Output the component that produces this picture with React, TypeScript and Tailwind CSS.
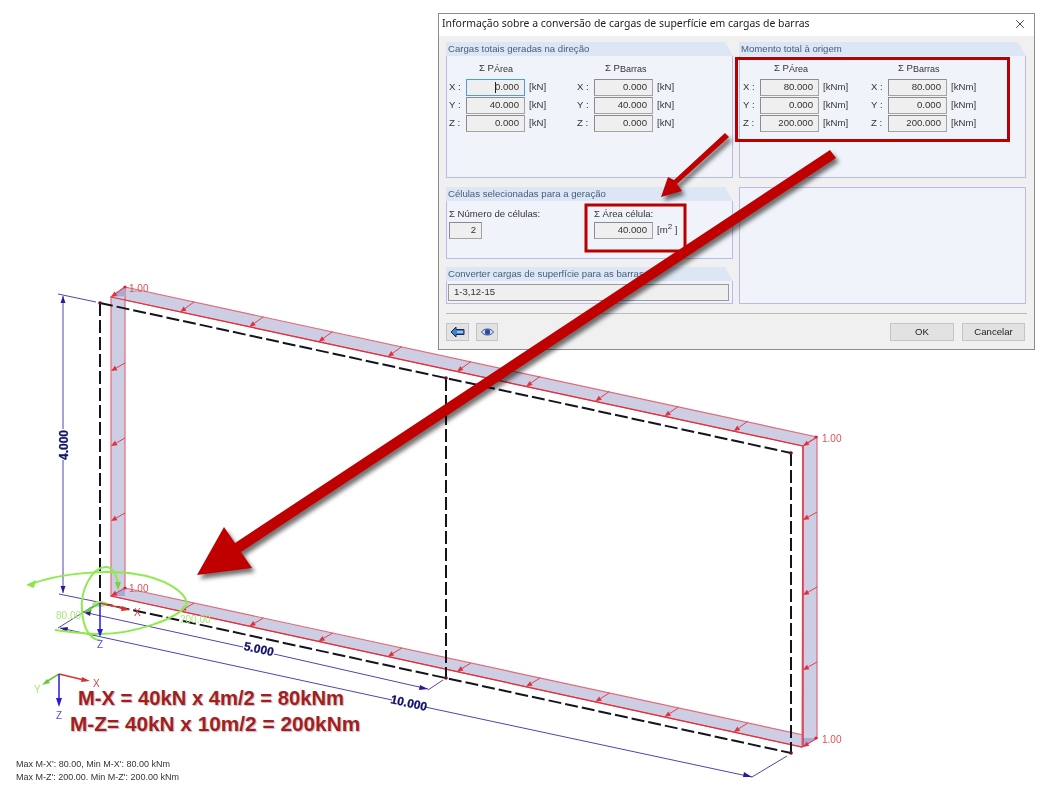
import React from "react";
import { X as CloseIcon } from "lucide-react";

const topArrows = Array.from({ length: 9 }, (_, i) => i + 1);

function Field({ value, w = "w-[59px]", focused = false }: { value: string; w?: string; focused?: boolean }) {
  return (
    <div
      className={`relative h-[17px] ${w} flex items-center justify-end pr-[5px] bg-[#efefef] text-[#333] border ${
        focused ? "border-[#4f9be0]" : "border-[#a3a3a3] border-t-[#8c8c8c] border-l-[#8c8c8c]"
      }`}
    >
      {value}
      {focused && <span className="absolute left-[28px] top-[2px] h-[11px] w-px bg-[#222]" />}
    </div>
  );
}

function Sigma({ sub, left }: { sub: string; left: string }) {
  return (
    <div className={`h-[15px] ${left} leading-[15px] text-[#333] whitespace-nowrap`}>
      Σ P<span className="text-[9px] relative top-[1px]">{sub}</span>
    </div>
  );
}

function Column({ sub, unit, values, focusFirst, subLeft }: { sub: string; unit: string; values: string[]; focusFirst?: boolean; subLeft: string }) {
  return (
    <div className="flex flex-col w-[128px]">
      <Sigma sub={sub} left={subLeft} />
      <div className="mt-[3px] flex flex-col">
        {["X", "Y", "Z"].map((axis, i) => (
          <div key={axis} className="flex items-center h-[18px]">
            <span className="w-[19px] pl-[2px] text-[#333]">{axis} :</span>
            <Field value={values[i]} focused={focusFirst && i === 0} />
            <span className="ml-[4px] text-[#333]">{unit}</span>
          </div>
        ))}
      </div>
    </div>
  );
}

function Group({ title, className, children }: { title?: string; className: string; children?: React.ReactNode }) {
  return (
    <div className={`flex flex-col ${className}`}>
      {title && (
        <div className="h-[14px] shrink-0 bg-[#dce6f4] pl-[2px] leading-[14px] text-[#46607c] whitespace-nowrap [clip-path:polygon(0_0,calc(100%-8px)_0,100%_100%,0_100%)]">
          {title}
        </div>
      )}
      <div className={`flex-1 bg-[#f0f4fa] border-[#b9b9ee] border-x border-b ${title ? "" : "border-t"}`}>{children}</div>
    </div>
  );
}

function Strip({ points }: { points: string }) {
  return <polygon points={points} className="fill-[#cdcde3] stroke-[#e46a76] [stroke-width:1.2]" />;
}

function LoadArrow({ x1, y1, x2, y2 }: { x1: number; y1: number; x2: number; y2: number }) {
  const dx = x2 - x1;
  const dy = y2 - y1;
  const len = Math.hypot(dx, dy);
  const ux = dx / len;
  const uy = dy / len;
  const bx = x2 - ux * 6;
  const by = y2 - uy * 6;
  return (
    <g>
      <line x1={x1} y1={y1} x2={bx} y2={by} className="stroke-[#e0404c]" strokeWidth={1} />
      <polygon
        points={`${x2},${y2} ${bx - uy * 2.5},${by + ux * 2.5} ${bx + uy * 2.5},${by - ux * 2.5}`}
        className="fill-[#e0303c]"
      />
    </g>
  );
}

function Drawing() {
  return (
    <svg className="absolute inset-0 blur-[0.3px]" width={1048} height={794} viewBox="0 0 1048 794">
      {/* member strips */}
      <Strip points="125,287 817,437 803,446 111,297" />
      <Strip points="125,588 817,738 802,747 111,596" />
      <Strip points="111,297 125,287 125,588 111,596" />
      <Strip points="803,446 817,437 817,738 802,747" />
      <polygon points="111,297 125,287 125,296" className="fill-[#a9a9d6]" />
      <polygon points="111,596 125,588 125,596" className="fill-[#a9a9d6]" />
      <polygon points="802,747 817,738 803,738" className="fill-[#a9a9d6]" />
      <line x1="111" y1="297" x2="803" y2="446" className="stroke-[#e0303c]" strokeWidth={1.2} />
      <line x1="803" y1="446" x2="803" y2="747" className="stroke-[#e0303c]" strokeWidth={1.4} />
      <line x1="111" y1="596" x2="802" y2="747" className="stroke-[#e0303c]" strokeWidth={1.2} />

      {topArrows.map((i) => (
        <g key={i}>
          <LoadArrow x1={125 + 69.2 * i} y1={287 + 14.9 * i} x2={111 + 69.2 * i} y2={297 + 14.9 * i} />
          <LoadArrow x1={125 + 69.2 * i} y1={588 + 15 * i} x2={111 + 69.2 * i} y2={596 + 15.1 * i} />
        </g>
      ))}
      {[363, 438, 513].map((y) => (
        <LoadArrow key={y} x1={125} y1={y} x2={111} y2={y + 8} />
      ))}
      {[512, 587, 662].map((y) => (
        <LoadArrow key={y} x1={817} y1={y} x2={803} y2={y + 8} />
      ))}
      <LoadArrow x1={125} y1={287} x2={111} y2={297} />
      <LoadArrow x1={125} y1={588} x2={111} y2={596} />
      <LoadArrow x1={817} y1={437} x2={803} y2={446} />
      <LoadArrow x1={817} y1={738} x2={803} y2={747} />
      {[[125, 287], [816, 437], [125, 588], [816, 738]].map(([cx, cy]) => (
        <circle key={cx + "-" + cy} cx={cx} cy={cy} r={1.6} className="fill-[#e0202c]" />
      ))}

      {/* dashed frame */}
      <g className="stroke-[#14141e]" strokeWidth={2} strokeDasharray="13 4" fill="none">
        <line x1="100" y1="303" x2="791" y2="453" />
        <line x1="100" y1="603" x2="791" y2="753" />
        <line x1="100" y1="303" x2="100" y2="603" />
        <line x1="791" y1="453" x2="791" y2="753" />
        <line x1="446" y1="378" x2="446" y2="678" />
      </g>
      {[[100, 303], [791, 453], [446, 378], [446, 678], [791, 753]].map(([cx, cy]) => (
        <circle key={cx + "-" + cy} cx={cx} cy={cy} r={1.8} className="fill-[#6a1020]" />
      ))}

      {/* dimensions */}
      <g className="stroke-[#5044b0]" strokeWidth={1} fill="none">
        <line x1="58" y1="294" x2="96" y2="302" />
        <line x1="63" y1="296" x2="63" y2="429" />
        <line x1="63" y1="460" x2="63" y2="593" />
        <line x1="59" y1="594" x2="98" y2="602" />
        <line x1="83" y1="612" x2="243" y2="647" />
        <line x1="274" y1="654" x2="428" y2="689" />
        <line x1="428" y1="690" x2="443" y2="680" />
        <line x1="58" y1="628" x2="95" y2="605" />
        <line x1="60" y1="628" x2="392" y2="700" />
        <line x1="425" y1="707" x2="752" y2="777" />
        <line x1="752" y1="777" x2="787" y2="756" />
      </g>
      <g className="fill-[#2a1a9a]">
        <polygon points="63,296 60.5,303 65.5,303" />
        <polygon points="63,593 60.5,586 65.5,586" />
        <polygon points="83,612 91,611 90,616" />
        <polygon points="428,689 420,685 419,690" />
        <polygon points="60,628 68,627 67,632" />
        <polygon points="752,777 744,772 743,777" />
      </g>
      <g className="fill-[#12126e] stroke-[#12126e] [stroke-width:0.3] [font-family:'Liberation_Sans',sans-serif] text-[12px] font-bold">
        <text x={0} y={0} textAnchor="middle" transform="translate(68 445) rotate(-90)">4.000</text>
        <text x={0} y={0} textAnchor="middle" transform="translate(258 653) rotate(12.5)">5.000</text>
        <text x={0} y={0} textAnchor="middle" transform="translate(408 707) rotate(12.5)">10.000</text>
      </g>

      {/* moment rings */}
      <g className="stroke-[#8cec4c]" strokeWidth={2} fill="none">
        <path d="M29 585 C60 572 110 570 135 574 C165 578 185 592 187 603 C180 620 130 634 100 634 C85 634 70 632 55 630" />
        <path d="M118 588 C118 575 112 566 105 567 C92 568 80 590 82 610 C83 628 90 640 100 640" />
      </g>
      <polygon points="26,585 36,580 34,588" className="fill-[#88e848]" />
      <polygon points="118,590 115,582 121,582" className="fill-[#7ad040]" />
      <ellipse cx="100" cy="604" rx="8" ry="3" className="fill-[#a8ec80]" />

      {/* local axes */}
      <g fill="none" strokeWidth={1.5}>
        <line x1="100" y1="603" x2="126" y2="609" className="stroke-[#e03030]" />
        <line x1="100" y1="603" x2="85" y2="612" className="stroke-[#68c838]" />
        <line x1="100" y1="603" x2="100" y2="633" className="stroke-[#2a18e0]" />
        <line x1="59" y1="674" x2="84" y2="680" className="stroke-[#e03030]" />
        <line x1="59" y1="674" x2="46" y2="682" className="stroke-[#68c838]" />
        <line x1="59" y1="674" x2="59" y2="700" className="stroke-[#2a18e0]" />
      </g>
      <polygon points="130,610 122,606 121,611" className="fill-[#d83030]" />
      <polygon points="83,613 90,607 92,611" className="fill-[#68c838]" />
      <polygon points="100,637 97,629 103,629" className="fill-[#2a18e0]" />
      <polygon points="90,681 82,677 81,682" className="fill-[#d83030]" />
      <polygon points="42,685 47,679 50,683" className="fill-[#68c838]" />
      <polygon points="59,707 56,698 62,698" className="fill-[#2a18e0]" />

      <g className="[font-family:'Liberation_Sans',sans-serif] text-[10px]">
        <text x={134} y={616} className="fill-[#e04040]">X</text>
        <text x={97} y={648} className="fill-[#5a48f0]">Z</text>
        <text x={56} y={619} className="fill-[#a8e878]">80.00</text>
        <text x={180} y={623} className="fill-[#a8e878]">200.00</text>
        <text x={93} y={687} className="fill-[#e04040]">X</text>
        <text x={34} y={693} className="fill-[#a8e878]">Y</text>
        <text x={56} y={719} className="fill-[#5a48f0]">Z</text>
        <text x={129} y={292} className="fill-[#e05058]">1.00</text>
        <text x={129} y={592} className="fill-[#e05058]">1.00</text>
        <text x={822} y={442} className="fill-[#e05058]">1.00</text>
        <text x={822} y={743} className="fill-[#e05058]">1.00</text>
      </g>
    </svg>
  );
}

function Dialog() {
  return (
    <div className="absolute left-[438px] top-[13px] w-[597px] h-[337px] flex flex-col bg-[#f0f0f0] border border-[#8c8c8c] text-[9.6px] blur-[0.3px] [font-family:'Liberation_Sans',sans-serif]">
      <div className="h-[22px] shrink-0 bg-white flex items-center justify-between pl-[3px] pr-[7px] pb-[2px] text-[10.45px] text-[#1c1c1c] [font-family:'Noto_Sans',sans-serif]">
        <span>Informação sobre a conversão de cargas de superfície em cargas de barras</span>
        <CloseIcon className="w-[14px] h-[14px] text-[#333]" strokeWidth={1.5} />
      </div>
      <div className="flex-1 pl-[7px] pr-[7px] pt-[6px] grid grid-cols-[287px_287px] gap-x-[6px] grid-rows-[136px_117px] gap-y-[9px]">
        <Group title="Cargas totais geradas na direção" className="">
          <div className="flex pt-[4px]">
            <Column sub="Área" unit="[kN]" values={["0.000", "40.000", "0.000"]} focusFirst subLeft="pl-[32px]" />
            <Column sub="Barras" unit="[kN]" values={["0.000", "40.000", "0.000"]} subLeft="pl-[30px]" />
          </div>
        </Group>
        <Group title="Momento total à origem" className="">
          <div className="flex pt-[4px] pl-[1px]">
            <Column sub="Área" unit="[kNm]" values={["80.000", "0.000", "200.000"]} subLeft="pl-[33px]" />
            <Column sub="Barras" unit="[kNm]" values={["80.000", "0.000", "200.000"]} subLeft="pl-[29px]" />
          </div>
        </Group>
        <div className="flex flex-col justify-between">
          <Group title="Células selecionadas para a geração" className="h-[72px]">
            <div className="flex pl-[2px] pt-[5px]">
              <div className="w-[145px]">
                <div className="h-[15px] leading-[15px] text-[#333]">Σ Número de células:</div>
                <div className="mt-[1px]">
                  <Field value="2" w="w-[33px]" />
                </div>
              </div>
              <div>
                <div className="h-[15px] leading-[15px] text-[#333]">Σ Área célula:</div>
                <div className="mt-[1px] flex items-center">
                  <Field value="40.000" />
                  <span className="ml-[4px] text-[#333]">
                    [m<sup className="text-[8px]">2</sup> ]
                  </span>
                </div>
              </div>
            </div>
          </Group>
          <Group title="Converter cargas de superfície para as barras" className="h-[37px]">
            <div className="pl-[1px] pr-[3px] pt-[3px]">
              <div className="h-[17px] bg-[#efefef] border border-[#9a9a9a] flex items-center pl-[5px] text-[#333]">1-3,12-15</div>
            </div>
          </Group>
        </div>
        <Group className="" />
      </div>
      <div className="mx-[7px] mt-[8px] border-t border-[#bcbcbc]" />
      <div className="h-[27px] shrink-0 mb-[8px] flex items-end justify-between pl-[7px] pr-[9px]">
        <div className="flex gap-x-[7px]">
          <button className="w-[23px] h-[18px] bg-[#e2e2e2] border border-[#c4c4c4] flex items-center justify-center">
            <svg width="15" height="12" viewBox="0 0 15 12">
              <path d="M1 6 L6 1 L6 3.5 L14 3.5 L14 8.5 L6 8.5 L6 11 Z" fill="#3b82d0" stroke="#14284a" strokeWidth="1" />
              <line x1="7" y1="6" x2="13" y2="6" stroke="#ffffff" strokeWidth="1" />
            </svg>
          </button>
          <button className="w-[22px] h-[18px] bg-[#e2e2e2] border border-[#c4c4c4] flex items-center justify-center">
            <svg width="13" height="10" viewBox="0 0 13 10">
              <path d="M0.5 5 C3 1 10 1 12.5 5 C10 9 3 9 0.5 5 Z" fill="#dfe8f8" stroke="#2a4a90" strokeWidth="1" />
              <circle cx="6.5" cy="5" r="2.7" fill="#2a4aa0" />
            </svg>
          </button>
        </div>
        <div className="flex gap-x-[8px]">
          <button className="w-[64px] h-[18px] bg-[#e2e2e2] border border-[#c4c4c4] text-[#222] leading-none">OK</button>
          <button className="w-[63px] h-[18px] bg-[#e2e2e2] border border-[#c4c4c4] text-[#222] leading-none">Cancelar</button>
        </div>
      </div>
    </div>
  );
}

function Annotations() {
  return (
    <svg className="absolute inset-0" width={1048} height={794} viewBox="0 0 1048 794">
      <rect x="736.5" y="58.5" width="272" height="82" fill="none" className="stroke-[#b80000]" strokeWidth={3} />
      <rect x="586" y="205" width="99" height="46" fill="none" className="stroke-[#b80000]" strokeWidth={3} />
      <g className="fill-[#c00000] drop-shadow-[3px_4px_2px_rgba(0,0,0,0.55)]">
        <polygon points="725,133 729,137 677,184 682,191 661,197 668,177 674,180" />
        <polygon points="830,150 836,158 241,552 252,568 197,575 224,527 235,543" />
      </g>
    </svg>
  );
}

export default function App() {
  return (
    <div className="relative w-[1048px] h-[794px] bg-white overflow-hidden [font-family:'Liberation_Sans',sans-serif]">
      <Drawing />
      <Dialog />
      <Annotations />
      <div className="absolute left-[78px] top-[687px] text-[20.2px] leading-[22px] font-bold text-[#a51d1d] whitespace-nowrap [text-shadow:1px_1px_1px_rgba(120,120,140,0.5)]">
        M-X = 40kN x 4m/2 = 80kNm
      </div>
      <div className="absolute left-[70px] top-[713px] text-[20.8px] leading-[22px] font-bold text-[#a51d1d] whitespace-nowrap [text-shadow:1px_1px_1px_rgba(120,120,140,0.5)]">
        M-Z= 40kN x 10m/2 = 200kNm
      </div>
      <div className="absolute left-[16px] top-[758px] text-[9px] leading-[12.5px] text-[#333] whitespace-nowrap blur-[0.3px]">
        <div>Max M-X': 80.00, Min M-X': 80.00 kNm</div>
        <div>Max M-Z': 200.00. Min M-Z': 200.00 kNm</div>
      </div>
    </div>
  );
}
